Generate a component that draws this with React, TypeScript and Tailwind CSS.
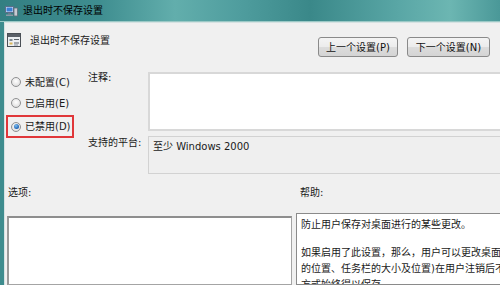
import React from "react";

const font = { fontFamily: '"DejaVu Sans", "Noto Sans CJK SC", sans-serif' };

function TitleIcon() {
  return (
    <svg width="13" height="12" viewBox="0 0 13 12">
      <rect x="0.5" y="1.5" width="8" height="6" fill="#dbe8f5" stroke="#5a6f8a" />
      <rect x="1.5" y="2.5" width="6" height="4" fill="#3b7fd6" />
      <rect x="3" y="8" width="3" height="1.5" fill="#6b7b8c" />
      <rect x="1" y="9.5" width="7" height="1.5" fill="#8b98a6" />
      <rect x="9" y="3" width="3.5" height="8" fill="#c6ccd3" stroke="#5f6b78" strokeWidth="0.8" />
    </svg>
  );
}

function PolicyIcon() {
  return (
    <svg width="14" height="14" viewBox="0 0 14 14">
      <rect x="0.5" y="0.5" width="13" height="13" fill="#eceff2" stroke="#4a4f55" />
      <rect x="1" y="1" width="12" height="3" fill="#5a6068" />
      <rect x="2.5" y="6" width="3" height="2" fill="#7d8790" />
      <rect x="7" y="6" width="5" height="1" fill="#5b636b" />
      <rect x="2.5" y="9.5" width="3" height="2" fill="#d9b65a" />
      <rect x="7" y="9.5" width="5" height="1" fill="#5b636b" />
      <rect x="7" y="11.5" width="4" height="1" fill="#8a9199" />
    </svg>
  );
}

function Radio({ checked }: { checked?: boolean }) {
  return (
    <span className="flex items-center justify-center w-[10px] h-[10px] rounded-full border border-[#8f9092] bg-[radial-gradient(circle_at_50%_40%,#ffffff_0%,#e6e6e6_60%,#cfcfcf_100%)]">
      {checked && (
        <span className="w-[5px] h-[5px] rounded-full bg-[radial-gradient(circle_at_40%_35%,#7fc0f0_0%,#1e63b5_70%,#0e3f7a_100%)]" />
      )}
    </span>
  );
}

function Btn({ label, w }: { label: string; w: string }) {
  return (
    <div
      className={`${w} h-[20px] flex items-center justify-center rounded-[3px] border border-[#8a8a8a] bg-[linear-gradient(180deg,#f4f4f4_0%,#ececec_48%,#dcdcdc_52%,#d4d4d4_100%)] text-[10px] text-[#111]`}
    >
      {label}
    </div>
  );
}

export default function App() {
  return (
    <div style={font} className="w-[500px] h-[285px] overflow-hidden flex flex-col bg-[#f0f0f0] text-[10px] text-[#1a1a1a]">
      {/* title bar */}
      <div className="h-[22px] shrink-0 flex items-center gap-[5px] pl-[5px] border-b border-[#9cc9c6] bg-[linear-gradient(90deg,#337f82_0%,#3f8e90_20%,#62aeac_35%,#4f9d9e_48%,#3a8889_62%,#5aa7a6_80%,#6cb6b2_90%,#4a9898_100%)]">
        <TitleIcon />
        <span className="text-[10px] text-black">退出时不保存设置</span>
      </div>

      <div className="flex flex-1 min-h-0">
        <div className="w-[4px] shrink-0 bg-[#3e8c8e]" />
        <div className="flex-1 min-w-0 flex flex-col border-l border-t border-[#d6e2e2] bg-[#f0f0f0]">
          {/* header */}
          <div className="h-[41px] shrink-0 flex items-start justify-between pr-[10px]">
            <div className="mt-[10px] ml-[2px] h-[14px] flex items-center gap-[9px]">
              <PolicyIcon />
              <span>退出时不保存设置</span>
            </div>
            <div className="mt-[14px] flex gap-[9px]">
              <Btn label="上一个设置(P)" w="w-[80px]" />
              <Btn label="下一个设置(N)" w="w-[83px]" />
            </div>
          </div>

          {/* middle */}
          <div className="flex shrink-0 pt-[8px]">
            <div className="w-[78px] shrink-0 flex flex-col">
              <div className="h-[20px] pl-[6px] flex items-center gap-[4px]">
                <Radio />
                <span>未配置(C)</span>
              </div>
              <div className="h-[20px] mt-[1px] pl-[6px] flex items-center gap-[4px]">
                <Radio />
                <span>已启用(E)</span>
              </div>
              <div className="h-[23px] w-[68px] mt-[2px] ml-[1px] pl-[3px] border-2 border-[#e0373a] flex items-center gap-[4px]">
                <Radio checked />
                <span>已禁用(D)</span>
              </div>
            </div>
            <div className="flex-1 min-w-0 grid grid-cols-[60px_1fr] gap-y-[5px] pl-[5px]">
              <span className="leading-[12px]">注释:</span>
              <div className="h-[59px] bg-white border-2 border-[#d8d8d8] border-r-0" />
              <span className="leading-[12px] pt-[1px]">支持的平台:</span>
              <div className="h-[38px] bg-[#efefef] border border-[#d2d2d2] border-r-0 pl-[4px] pt-[4px] leading-[12px]">
                至少 Windows 2000
              </div>
            </div>
          </div>

          {/* bottom */}
          <div className="flex flex-1 min-h-0 mt-[12px]">
            <div className="w-[291px] shrink-0 flex flex-col">
              <span className="pl-[3px] leading-[14px]">选项:</span>
              <div className="flex-1 ml-[2px] w-[285px] mt-[16px] bg-white border border-[#a4a4a4] border-l-2 border-t-2 border-l-[#9a9a9a] border-t-[#8e8e8e]" />
            </div>
            <div className="flex-1 min-w-0 flex flex-col">
              <span className="pl-[4px] leading-[14px]">帮助:</span>
              <div className="flex-1 mt-[13px] bg-white border border-[#8a8a8a] border-r-0 pl-[4px] pt-[4px] overflow-hidden whitespace-nowrap">
                <div className="leading-[14px]">防止用户保存对桌面进行的某些更改。</div>
                <div className="mt-[13px] leading-[16px]">
                  <div>如果启用了此设置，那么，用户可以更改桌面，但有些更改(例如，打开窗口</div>
                  <div>的位置、任务栏的大小及位置)在用户注销后不会被保存。但是，任务栏上的快捷</div>
                  <div>方式始终得以保存。</div>
                </div>
              </div>
            </div>
          </div>
        </div>
      </div>
    </div>
  );
}
